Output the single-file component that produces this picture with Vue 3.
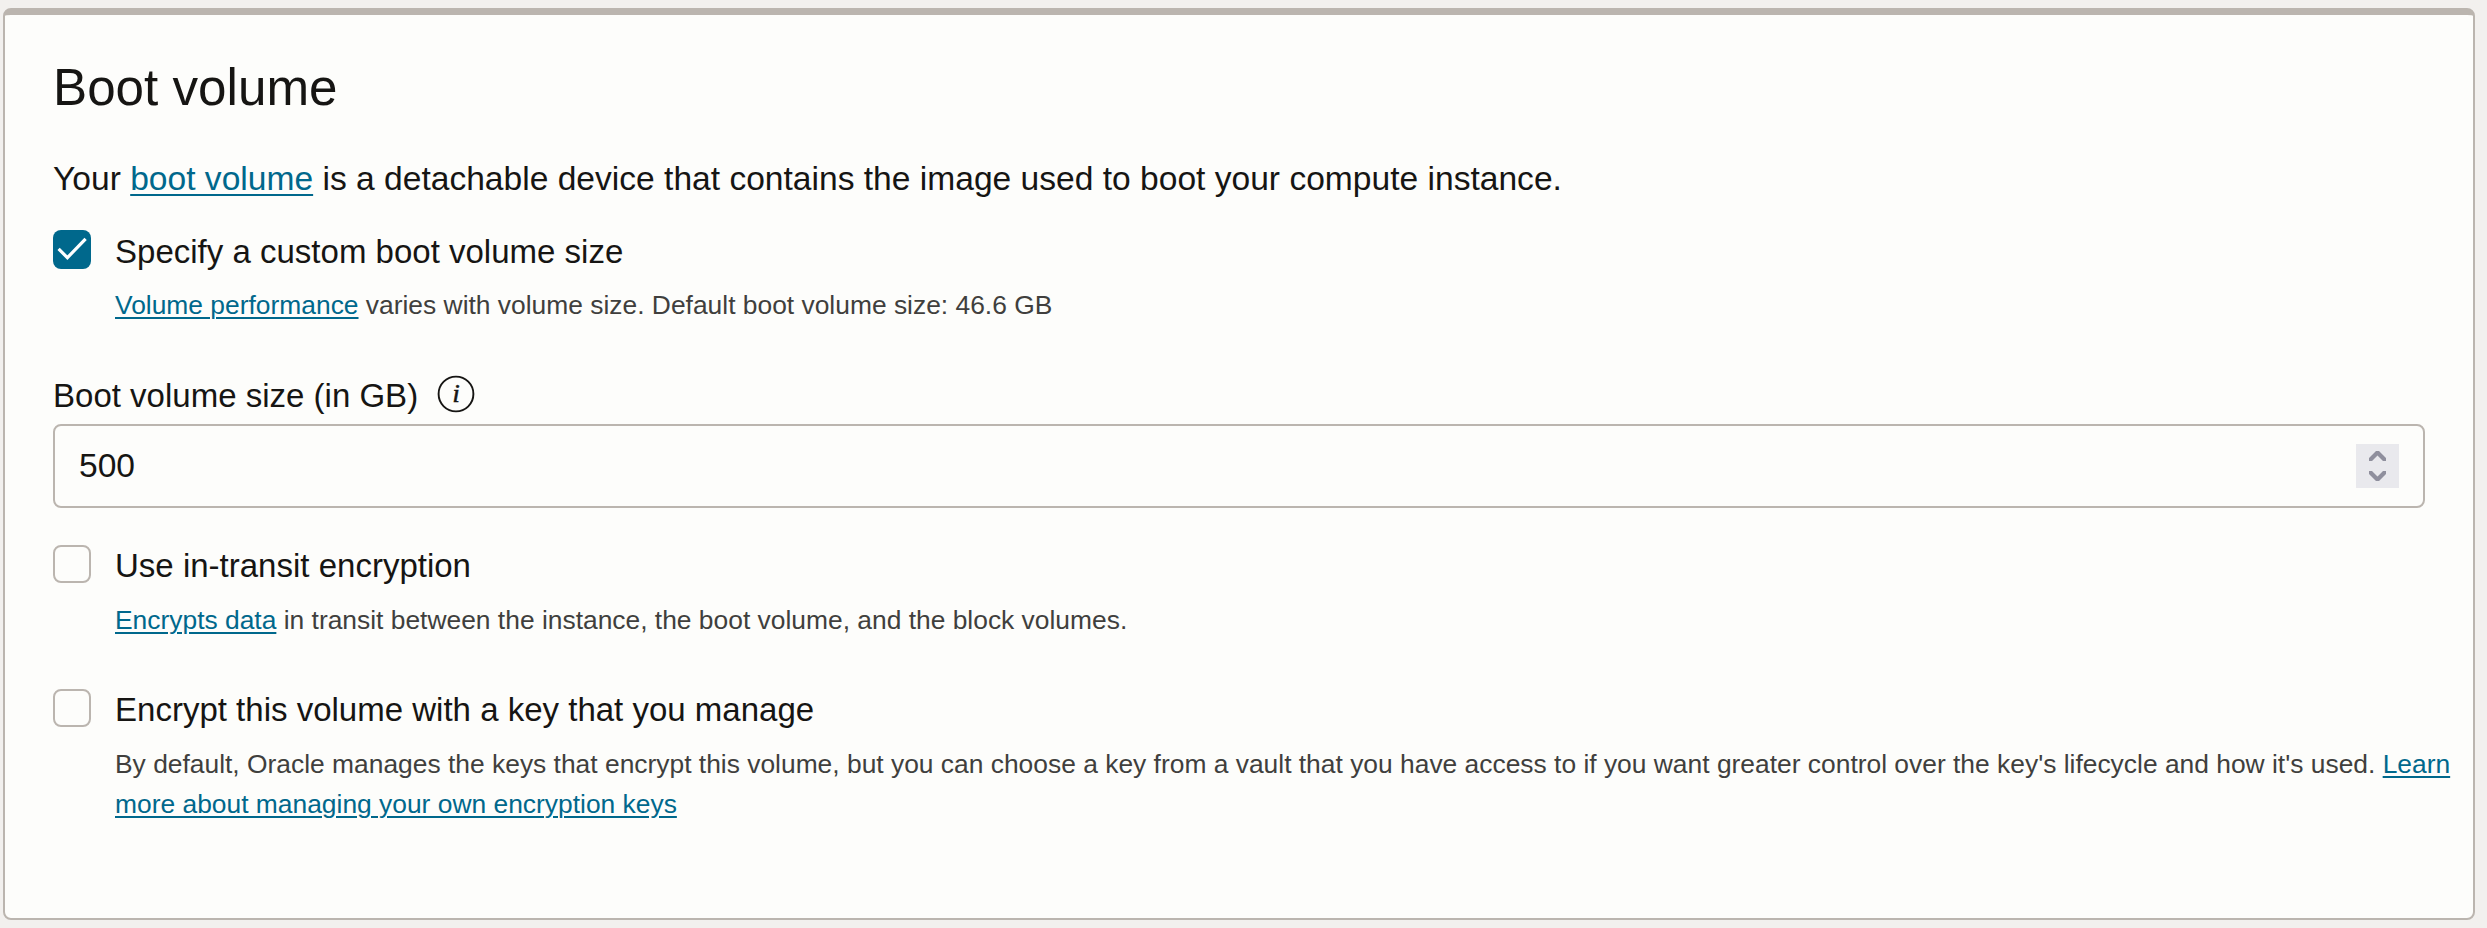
<script setup>
import { ref } from 'vue'
const size = ref('500')
</script>

<template>
  <main class="page">
    <section class="card">
      <h2 class="title">Boot volume</h2>
      <p class="intro">Your <a class="link">boot volume</a> is a detachable device that contains the image used to boot your compute instance.</p>

      <div class="option first">
        <span class="box checked">
          <svg width="38" height="39" viewBox="0 0 38 39"><path d="M5.6 18.8 14.4 27.7 32.6 8.8" fill="none" stroke="#fff" stroke-width="3.2" /></svg>
        </span>
        <div class="body">
          <div class="label">Specify a custom boot volume size</div>
          <div class="hint"><a class="link">Volume performance</a> varies with volume size. Default boot volume size: 46.6 GB</div>
        </div>
      </div>

      <div class="field">
        <div class="field-label">
          <span>Boot volume size (in GB)</span>
          <svg class="info" width="38" height="38" viewBox="0 0 38 38">
            <circle cx="19" cy="19" r="17.4" fill="none" stroke="#161513" stroke-width="1.9" />
            <text x="19.2" y="26.5" text-anchor="middle">i</text>
          </svg>
        </div>
        <div class="input">
          <span>{{ size }}</span>
          <svg class="spinner" width="43" height="44" viewBox="0 0 43 44">
            <path d="M13 14 20 7h3l7 7v3h-3l-5.5-5.6L16 17h-3zM13 30l7 7h3l7-7v-3h-3l-5.5 5.6L16 27h-3z" fill="#8f8f9d" />
          </svg>
        </div>
      </div>

      <div class="option">
        <span class="box"></span>
        <div class="body">
          <div class="label">Use in-transit encryption</div>
          <div class="hint"><a class="link">Encrypts data</a> in transit between the instance, the boot volume, and the block volumes.</div>
        </div>
      </div>

      <div class="option last">
        <span class="box"></span>
        <div class="body">
          <div class="label">Encrypt this volume with a key that you manage</div>
          <div class="hint">By default, Oracle manages the keys that encrypt this volume, but you can choose a key from a vault that you have access to if you want greater control over the key's lifecycle and how it's used. <a class="link">Learn more about managing your own encryption keys</a></div>
        </div>
      </div>
    </section>
  </main>
</template>

<style>
body { background: #f2f0ee; }
</style>

<style scoped>
.page {
  box-sizing: border-box;
  height: 928px;
  padding: 8px 12px 8px 3px;
  overflow: hidden;
  background: #f2f0ee;
  color: #161513;
  font-family: "Liberation Sans", Arial, sans-serif;
}
.card {
  box-sizing: border-box;
  height: 912px;
  padding: 43px 0 0 48px;
  border: 2px solid #bbb5af;
  border-top-width: 7px;
  border-radius: 8px;
  background: #fdfdfb;
}
.title { margin: 0; font-size: 51.2px; line-height: 60px; font-weight: 400; }
.intro { margin: 41px 0 0; font-size: 33.6px; line-height: 40px; }
.link { color: #00688c; text-decoration: underline; text-decoration-thickness: 2px; text-underline-offset: 4px; }
.option { display: flex; gap: 24px; margin-top: 37px; }
.option.first { margin-top: 31px; }
.option.last { margin-top: 49px; }
.box {
  box-sizing: border-box;
  flex: none;
  width: 38px;
  height: 38px;
  border: 2px solid #bbb5af;
  border-radius: 8px;
}
.box.checked { height: 39px; border: 0; background: #00688c; }
.box svg { display: block; }
.label { padding-top: 2px; font-size: 33.03px; line-height: 38px; }
.first .label { padding-top: 3px; }
.hint { margin-top: 15px; font-size: 26.4px; line-height: 40px; color: #403f3d; }
.first .hint { margin-top: 14px; }
.hint .link { text-underline-offset: 3px; }
.field { width: 2372px; margin-top: 52px; }
.field-label { display: flex; gap: 19px; height: 38px; font-size: 33.03px; line-height: 38px; }
.info { margin-top: -2px; }
.info text { font: italic 26px "Liberation Serif", serif; fill: #161513; stroke: #161513; stroke-width: 0.6px; }
.input {
  box-sizing: border-box;
  display: flex;
  align-items: center;
  justify-content: space-between;
  height: 84px;
  margin-top: 9px;
  padding: 0 24px;
  border: 2px solid #bbb5af;
  border-radius: 8px;
  font-size: 33.6px;
}
.spinner { background: #e9e9ed; }
</style>
